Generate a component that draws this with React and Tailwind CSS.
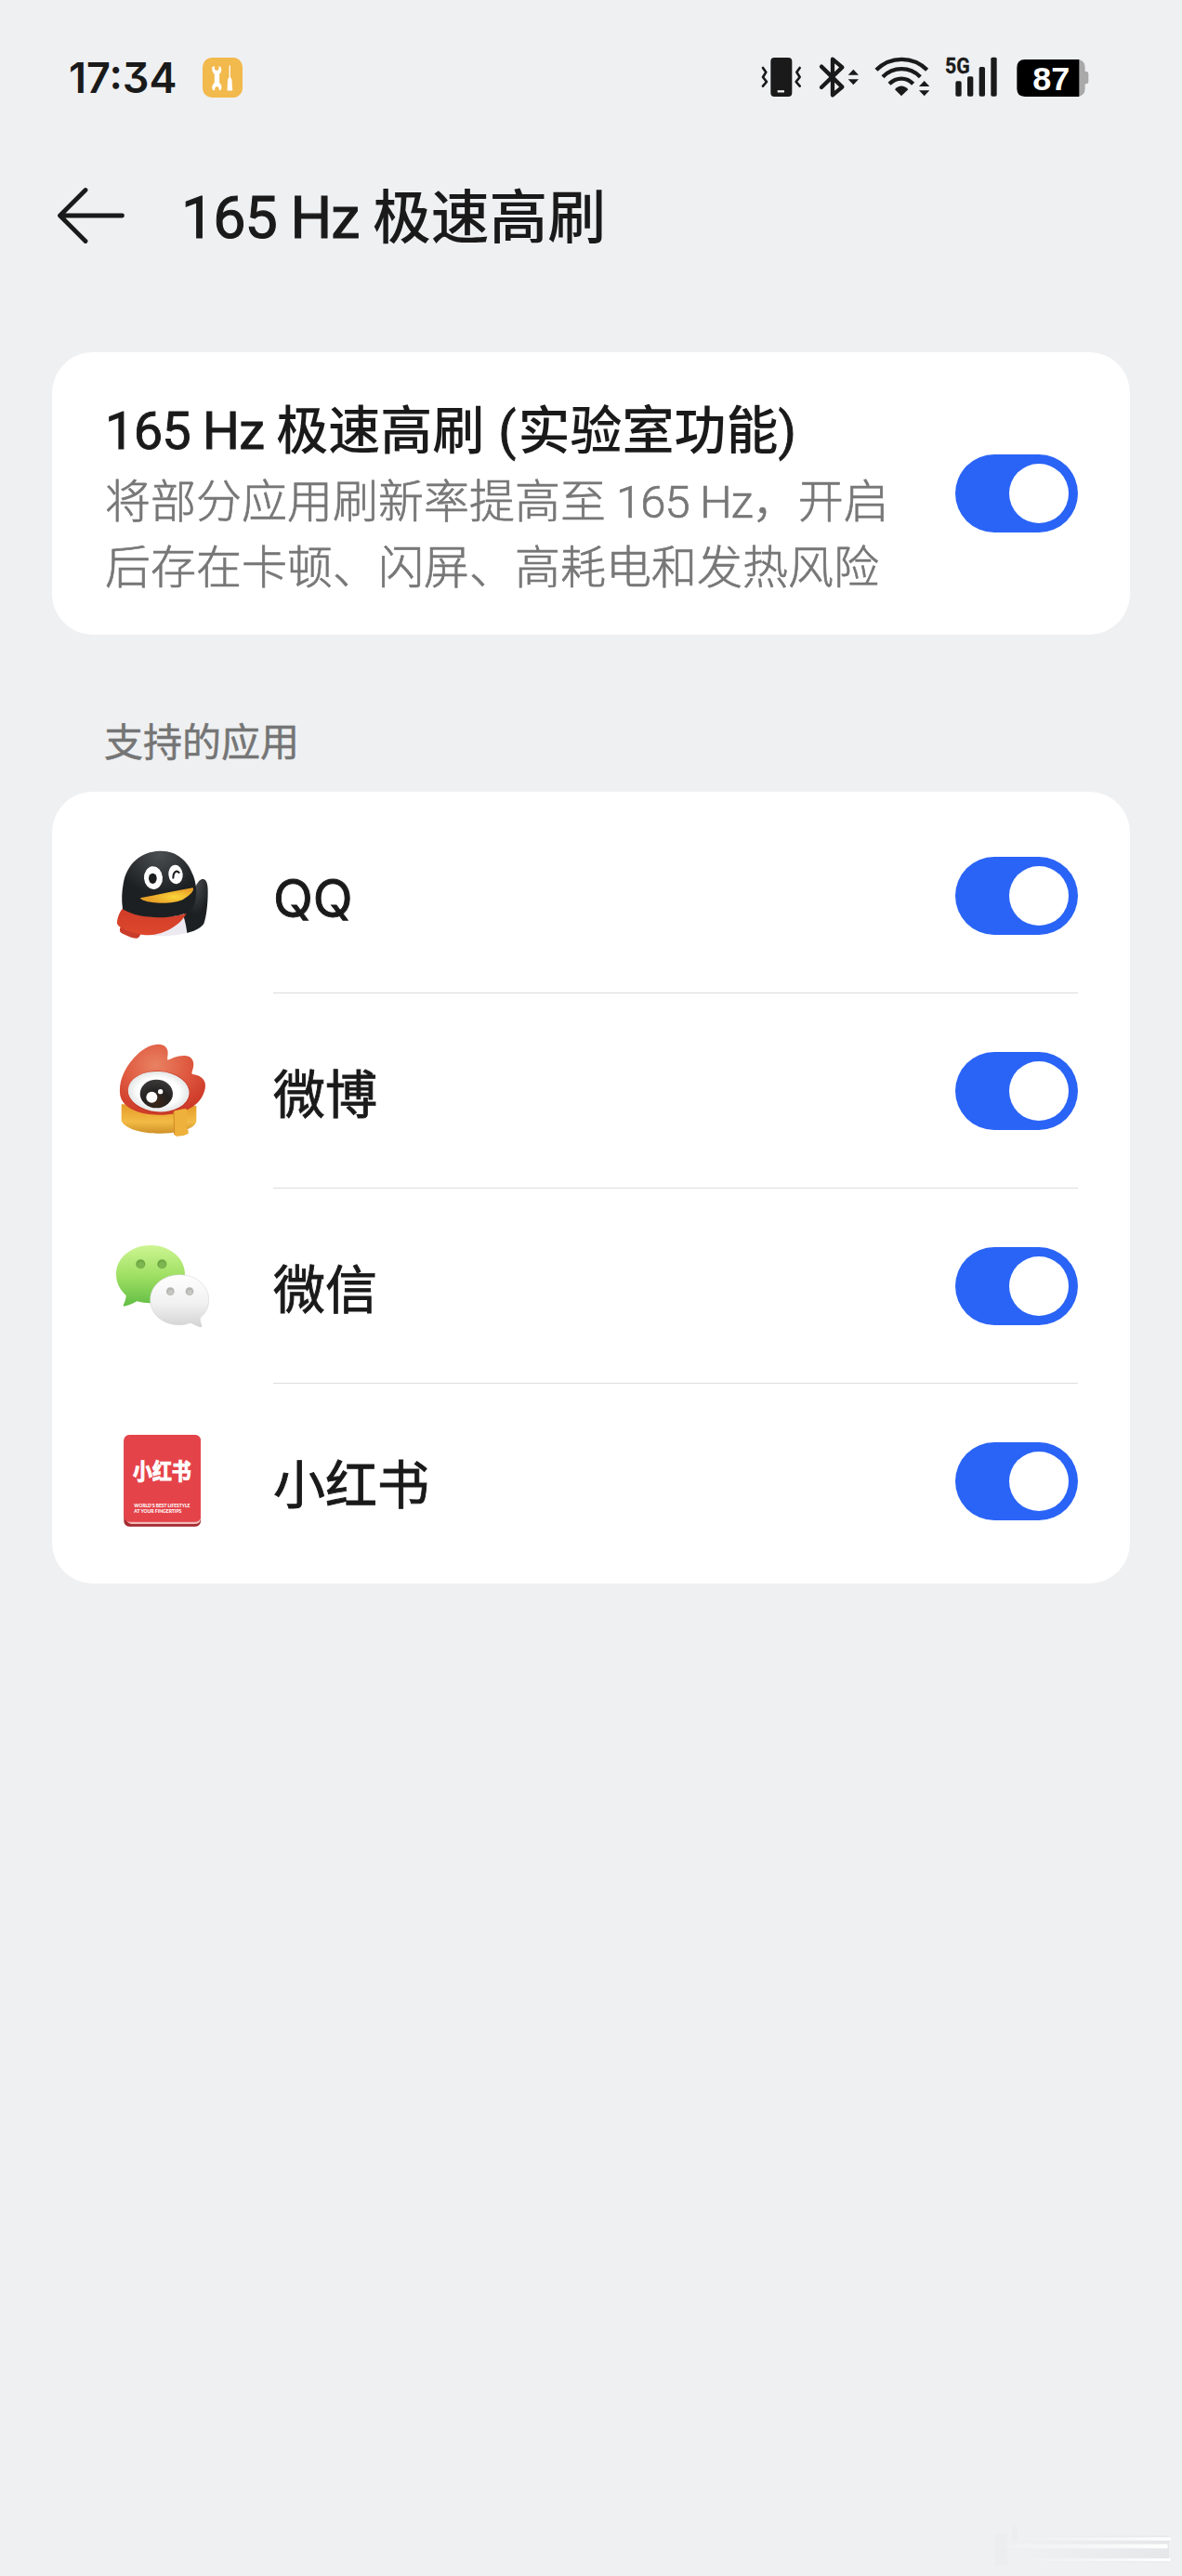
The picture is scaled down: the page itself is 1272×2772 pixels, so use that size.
import { useState } from 'react';
import clsx from 'clsx';

const QQIcon = () => (
    <svg viewBox="0 0 390 390" className="w-[130px] h-[130px]">
        <defs>
            <radialGradient id="qqHead" cx="0.5" cy="0.05" r="0.6">
                <stop offset="0" stopColor="#4a4e50" />
                <stop offset="1" stopColor="#1d2022" />
            </radialGradient>
            <radialGradient id="qqBeak" cx="0.65" cy="0.6" r="0.5">
                <stop offset="0" stopColor="#fbd63a" />
                <stop offset="1" stopColor="#e8a128" />
            </radialGradient>
            <linearGradient id="qqScarf" x1="0" y1="0" x2="0" y2="1">
                <stop offset="0" stopColor="#cf3c28" />
                <stop offset="1" stopColor="#dd482d" />
            </linearGradient>
        </defs>
        <path d="M100 325 C180 345 240 335 274 326 L278 250 L180 270 Z" fill="#ece9f1" />
        <path d="M322 153 C336 150 342 168 341 195 C341 235 336 275 328 297 C316 315 292 322 274 327 C272 310 268 290 262 270 L290 200 C300 178 310 156 322 153 Z" fill="url(#qqHead)" />
        <path d="M57 312 C56 322 58 326 66 329 C84 338 100 344 112 344 C118 343 121 338 124 331 L128 322 L66 300 Z" fill="#c93c29" />
        <path d="M66 248 C56 258 50 276 48 290 C47 298 50 302 58 308 C88 324 120 334 150 334 C200 332 252 302 272 264 C210 282 125 280 66 248 Z" fill="url(#qqScarf)" />
        <path d="M66 250 C62 220 63 195 68 168 C78 108 120 64 186 62 C240 60 278 95 294 142 C304 168 308 205 297 235 C288 258 262 270 216 275 C160 281 100 272 66 250 Z" fill="url(#qqHead)" />
        <ellipse cx="165" cy="149" rx="30" ry="37" fill="#fff" transform="rotate(-4 165 149)" />
        <ellipse cx="163" cy="151" rx="13" ry="17" fill="#1b1d1e" />
        <ellipse cx="237" cy="138" rx="23" ry="31" fill="#fff" transform="rotate(-6 237 138)" />
        <path d="M229 149 C229 130 240 123 248 132" fill="none" stroke="#1b1d1e" strokeWidth="6" strokeLinecap="round" />
        <path d="M123 214 C180 203 240 190 293 181 C299 190 282 207 262 218 C232 234 165 233 134 222 C127 219 123 217 123 214 Z" fill="url(#qqBeak)" />
    </svg>
);

const WeiboIcon = () => (
    <svg viewBox="0 0 390 390" className="w-[130px] h-[130px]">
        <defs>
            <radialGradient id="wbFlame" cx="0.42" cy="0.3" r="0.75">
                <stop offset="0" stopColor="#e98262" />
                <stop offset="0.5" stopColor="#df5a40" />
                <stop offset="1" stopColor="#cb3625" />
            </radialGradient>
            <linearGradient id="wbScarf" x1="0" y1="0" x2="0" y2="1">
                <stop offset="0" stopColor="#e59b28" />
                <stop offset="0.6" stopColor="#f2bb45" />
                <stop offset="1" stopColor="#cf9128" />
            </linearGradient>
            <radialGradient id="wbEye" cx="0.5" cy="0.5" r="0.55">
                <stop offset="0.6" stopColor="#ffffff" />
                <stop offset="1" stopColor="#dcdfdf" />
            </radialGradient>
            <radialGradient id="wbPupil" cx="0.5" cy="0.8" r="0.8">
                <stop offset="0" stopColor="#3d2617" />
                <stop offset="0.5" stopColor="#242221" />
                <stop offset="1" stopColor="#3c3b3b" />
            </radialGradient>
        </defs>
        <path d="M62 250 L62 302 C70 326 120 343 180 344 C225 345 270 338 292 322 C301 315 304 308 304 300 L304 255 Z" fill="url(#wbScarf)" />
        <path d="M58 222 C52 180 68 138 104 98 C126 74 152 58 180 56 C202 56 213 68 212 86 C211 98 209 105 212 107 C224 103 240 92 268 93 C290 95 298 112 294 130 C292 142 286 150 292 153 C314 155 334 168 333 190 C332 216 316 244 288 260 C250 282 200 288 150 282 C100 275 66 255 58 222 Z" fill="url(#wbFlame)" />
        <ellipse cx="183" cy="211" rx="101" ry="69" fill="#c63a27" transform="rotate(4 183 211)" />
        <ellipse cx="182" cy="209" rx="99" ry="65" fill="url(#wbEye)" transform="rotate(4 182 209)" />
        <ellipse cx="175" cy="216" rx="53" ry="46" fill="url(#wbPupil)" />
        <circle cx="160" cy="227" r="18" fill="#fff" />
        <circle cx="188" cy="209" r="8" fill="#fff" />
        <path d="M231 276 Q230 271 237 270 L267 264 Q274 264 274 271 L273 330 L278 334 L278 345 Q262 354 240 353 Q233 352 233 344 Z" fill="#eeb13b" />
        <path d="M231 276 L233 348" stroke="#d38b25" strokeWidth="3" fill="none" />
    </svg>
);

const WeChatIcon = () => (
    <svg viewBox="0 0 390 390" className="w-[130px] h-[130px]">
        <defs>
            <linearGradient id="wxGreen" x1="0" y1="0" x2="0" y2="1">
                <stop offset="0" stopColor="#cdf592" />
                <stop offset="0.5" stopColor="#9fe063" />
                <stop offset="1" stopColor="#62bd45" />
            </linearGradient>
            <linearGradient id="wxWhite" x1="0" y1="0" x2="0" y2="1">
                <stop offset="0" stopColor="#ffffff" />
                <stop offset="0.55" stopColor="#f1f1f1" />
                <stop offset="1" stopColor="#d3d3d3" />
            </linearGradient>
        </defs>
        <path d="M156 75 C217 75 267 115 267 169 C267 223 217 262 156 262 C141 262 126 260 112 256 C99 263 86 269 70 272 C67 271 68 268 70 264 C74 255 77 246 77 237 C57 219 45 196 45 169 C45 115 95 75 156 75 Z" fill="url(#wxGreen)" />
        <circle cx="124" cy="136" r="15" fill="#6da844" />
        <circle cx="125" cy="139" r="11" fill="#7db650" />
        <circle cx="193" cy="136" r="15" fill="#6da844" />
        <circle cx="194" cy="139" r="11" fill="#7db650" />
        <path d="M250 170 C302 170 344 205 344 251 C344 275 334 294 316 309 C315 319 318 326 321 334 C322 339 318 340 314 338 C304 334 294 329 285 325 C274 330 262 332 250 332 C197 332 155 298 155 251 C155 205 197 170 250 170 Z" fill="url(#wxWhite)" stroke="#cccccc" strokeWidth="1.5" />
        <circle cx="220" cy="224" r="13" fill="#b4b5b0" />
        <circle cx="221" cy="227" r="9" fill="#c4c5c1" />
        <circle cx="282" cy="224" r="13" fill="#b4b5b0" />
        <circle cx="283" cy="227" r="9" fill="#c4c5c1" />
    </svg>
);

const RedBookIcon = () => (
    <svg viewBox="0 0 390 390" className="w-[130px] h-[130px]">
        <rect x="70" y="62" width="248" height="291" rx="17" fill="#a32b31" />
        <path d="M74 326 H317 V332 Q314 345 300 345 H94 Q80 342 74 326 Z" fill="#f0b9b6" />
        <rect x="70" y="57" width="248" height="281" rx="17" fill="#e5434a" />
        <text x="193" y="200" textAnchor="middle" fontSize="70" fontWeight="700" fill="#fff" stroke="#fff" strokeWidth="3" textLength="188" lengthAdjust="spacingAndGlyphs" fontFamily="'Noto Sans CJK SC', sans-serif">小红书</text>
        <text x="103" y="291" fontSize="16" fontWeight="900" fill="#fff" textLength="180" lengthAdjust="spacingAndGlyphs" fontFamily="Lato, sans-serif">WORLD'S BEST LIFESTYLE</text>
        <text x="103" y="308" fontSize="16" fontWeight="900" fill="#fff" textLength="153" lengthAdjust="spacingAndGlyphs" fontFamily="Lato, sans-serif">AT YOUR FINGERTIPS</text>
    </svg>
);

const ToolsBadge = () => (
    <svg viewBox="0 0 128 128" className="w-[43px] h-[43px]">
        <rect width="128" height="128" rx="30" fill="#f2b94c" />
        <path d="M31 30 L38 27 L39 38 L46 42 L52 38 L52 27 L59 31 C62 40 60 47 54 53 L54 80 C61 86 63 96 59 103 L53 106 L52 96 L46 92 L40 96 L39 106 L32 103 C28 95 31 86 38 80 L38 53 C31 48 29 39 31 30 Z" fill="#fff" />
        <path d="M85 25 H89 V63 C94 66 95 74 94 82 L96 106 H79 L80 82 C79 74 81 66 85 63 Z" fill="#fff" />
    </svg>
);

const StatusIcons = () => (
    <div className="flex items-center text-[#1a1a1a]">
        {/* Vibrate */}
        <svg viewBox="50 60 180 140" className="w-[60px] h-[46.67px]" fill="none" stroke="currentColor" strokeWidth="8" strokeLinecap="round" strokeLinejoin="round">
            <rect x="87" y="66" width="69" height="126" rx="12" fill="currentColor" stroke="none" />
            <path d="M109 175 H131" stroke="#eff0f2" strokeWidth="7" strokeLinecap="butt" />
            <path d="M62 99 L72 113 L62 129 L74 144 L62 158" />
            <path d="M181 99 L171 113 L181 129 L169 144 L181 158" />
        </svg>
        {/* Bluetooth */}
        <svg viewBox="230 60 170 140" className="w-[56.67px] h-[46.67px]">
            <path d="M251 95 L318 161 L287 187 V71 L318 97 L251 162" fill="none" stroke="currentColor" strokeWidth="13" strokeLinecap="round" strokeLinejoin="round" />
            <path d="M354 104 L371 122 H337 Z M354 154 L371 136 H337 Z" fill="currentColor" />
        </svg>
        {/* Wifi */}
        <svg viewBox="400 60 240 140" className="w-[80px] h-[46.67px]" fill="none" stroke="currentColor" strokeWidth="13" strokeLinecap="butt">
            <path d="M430 106 C475 60 549 60 594 106" />
            <path d="M451 128 C485 94 538 94 572 128" />
            <path d="M472 151 C495 128 528 128 549 151" />
            <path d="M511 190 L490 169 C502 154 520 154 533 169 Z" fill="currentColor" stroke="none" />
            <path d="M585 141 L602 159 H568 Z M585 190 L602 172 H568 Z" fill="currentColor" stroke="none" />
        </svg>
        {/* Signal */}
        <svg viewBox="640 40 220 180" className="w-[73.33px] h-[60px]" fill="currentColor">
            <text x="652" y="117" fontSize="73" fontWeight="700" textLength="80" lengthAdjust="spacingAndGlyphs" stroke="currentColor" strokeWidth="1" fontFamily="Roboto, sans-serif">5G</text>
            <rect x="686" y="143" width="19" height="49" rx="5" />
            <rect x="724" y="128" width="19" height="64" rx="5" />
            <rect x="762" y="97" width="19" height="95" rx="5" />
            <rect x="800" y="66" width="19" height="126" rx="5" />
        </svg>
        {/* Battery */}
        <svg viewBox="860 60 265 140" className="w-[88.33px] h-[46.67px]">
            <path d="M1070 72 H1078 Q1102 74 1102 98 V111 H1106 Q1113 111 1113 118 V144 Q1113 151 1106 151 H1102 V166 Q1102 190 1078 192 H1070 Z" fill="#a9a9a9" />
            <path d="M908 72 H1083 V192 H908 Q882 192 882 166 V98 Q882 72 908 72 Z" fill="#000" />
            <text x="993" y="172" textAnchor="middle" fontSize="108" fontWeight="700" fill="#fff" fontFamily="'Liberation Sans', Arial, sans-serif">87</text>
        </svg>
    </div>
);

const Toggle = ({ label, checked, onChange }) => (
    <button
        type="button"
        role="switch"
        aria-checked={checked}
        aria-label={label}
        onClick={onChange}
        className={clsx(
            'flex shrink-0 items-center w-33 h-21 px-[10px] rounded-full transition-colors',
            checked ? 'bg-[#2a64f6] justify-end' : 'bg-gray-300 justify-start'
        )}
    >
        <span className="size-16 rounded-full bg-white"></span>
    </button>
);

const apps = [
    { name: 'QQ', Icon: QQIcon },
    { name: '微博', Icon: WeiboIcon },
    { name: '微信', Icon: WeChatIcon },
    { name: '小红书', Icon: RedBookIcon },
];

const App = () => {
    const [enabled, setEnabled] = useState(true);
    const [supported, setSupported] = useState({ QQ: true, 微博: true, 微信: true, 小红书: true });

    const toggleApp = (name) => setSupported({ ...supported, [name]: !supported[name] });

    return (
        <div className="flex flex-col w-[1272px] h-[2772px] overflow-hidden bg-[#eff0f2] text-[#1a1a1a] font-[Roboto,'Noto_Sans_CJK_SC',sans-serif]">
            {/* Status bar */}
            <div className="flex items-center justify-between h-[166px] pl-[74px] pr-[97px]">
                <div className="flex items-center">
                    <span className="w-[144px] text-[45px] font-semibold leading-none whitespace-nowrap font-[Inter,sans-serif] [font-feature-settings:'cv09']">17:34</span>
                    <ToolsBadge />
                </div>
                <StatusIcons />
            </div>

            {/* Header */}
            <header className="flex items-center h-[132px] pl-[61px]">
                <svg viewBox="0 0 74 72" className="w-[74px] h-[72px]" fill="none" stroke="currentColor" strokeWidth="4.8" strokeLinecap="round" strokeLinejoin="round">
                    <path d="M70.500 36 H4 M31 8.500 L3.500 36 L31 63.500" />
                </svg>
                <h1 className="ml-[60px] pt-[6px] text-[62.8px] leading-none font-medium whitespace-nowrap">
                    <span className="tracking-[-1px] font-normal [-webkit-text-stroke:1.1px_#1a1a1a]">165 Hz </span>极速高刷
                </h1>
            </header>

            {/* Main switch */}
            <section className="flex items-center mx-14 mt-[81px] h-[304px] pl-[57px] pr-14 rounded-[44px] bg-white">
                <div className="flex-1 pt-2">
                    <h2 className="text-[56px] leading-[77px] font-medium whitespace-nowrap">
                        <span className="tracking-[-0.8px] font-normal [-webkit-text-stroke:0.9px_#1a1a1a]">165 Hz </span>极速高刷<span className="ml-px mr-[2px] font-normal [-webkit-text-stroke:0.9px_#1a1a1a]"> (</span>实验室功能<span className="font-normal [-webkit-text-stroke:0.9px_#1a1a1a]">)</span>
                    </h2>
                    <p className="-mb-[3px] pt-[2px] text-[49px] leading-[71px] font-light text-[#777777] whitespace-nowrap [-webkit-text-stroke:0.7px_#777777]">
                        将部分应用刷新率提高至<span className="tracking-[-0.9px]"> 165 Hz</span>，开启
                        <br />
                        后存在卡顿、闪屏、高耗电和发热风险
                    </p>
                </div>
                <Toggle label="165 Hz 极速高刷" checked={enabled} onChange={() => setEnabled(!enabled)} />
            </section>

            <h3 className="ml-[112px] mt-[87px] h-[82px] text-[42px] leading-[60px] text-[#757575] [-webkit-text-stroke:0.5px_#757575]">支持的应用</h3>

            {/* Supported apps */}
            <section className="mx-14 pt-[7px] pb-[5px] rounded-[44px] bg-white">
                {apps.map(({ name, Icon }, idx) => (
                    <div key={name} className="flex items-center h-[210px] pl-[54px] pr-14">
                        <div className="-mt-2">
                            <Icon />
                        </div>
                        <div
                            className={clsx(
                                'flex flex-1 items-center justify-between h-full ml-[54px] border-b',
                                idx < apps.length - 1 ? 'border-[#dcdddd]' : 'border-transparent'
                            )}
                        >
                            <span
                                className={clsx(
                                    'text-[56px] leading-none font-normal [-webkit-text-stroke:0.9px_#1a1a1a]',
                                    name === 'QQ' ? 'pt-[7px] font-[Inter,sans-serif]' : 'pt-[10px]'
                                )}
                            >
                                {name}
                            </span>
                            <Toggle label={name} checked={supported[name]} onChange={() => toggleApp(name)} />
                        </div>
                    </div>
                ))}
            </section>

            {/* Faint streaks in the bottom corner */}
            <svg viewBox="0 0 816 276" className="w-[272px] h-[92px] mt-auto self-end">
                <defs>
                    <linearGradient id="streak" x1="0" x2="1">
                        <stop offset="0" stopColor="#fff" stopOpacity="0" />
                        <stop offset="1" stopColor="#fff" />
                    </linearGradient>
                    <linearGradient id="streakShade" x1="0" x2="1">
                        <stop offset="0" stopColor="#e2e3e4" stopOpacity="0" />
                        <stop offset="1" stopColor="#dcdddd" />
                    </linearGradient>
                </defs>
                <rect x="212" y="140" width="40" height="102" fill="#ecedee" />
                <rect x="268" y="115" width="18" height="50" fill="#ecedee" />
                <rect x="290" y="146" width="484" height="86" fill="url(#streakShade)" opacity="0.5" />
                <rect x="290" y="151" width="490" height="10" rx="5" fill="url(#streak)" />
                <rect x="200" y="173" width="570" height="14" rx="3" fill="url(#streak)" />
                <rect x="290" y="219" width="490" height="10" rx="5" fill="url(#streak)" />
            </svg>
        </div>
    );
};

export default App;
